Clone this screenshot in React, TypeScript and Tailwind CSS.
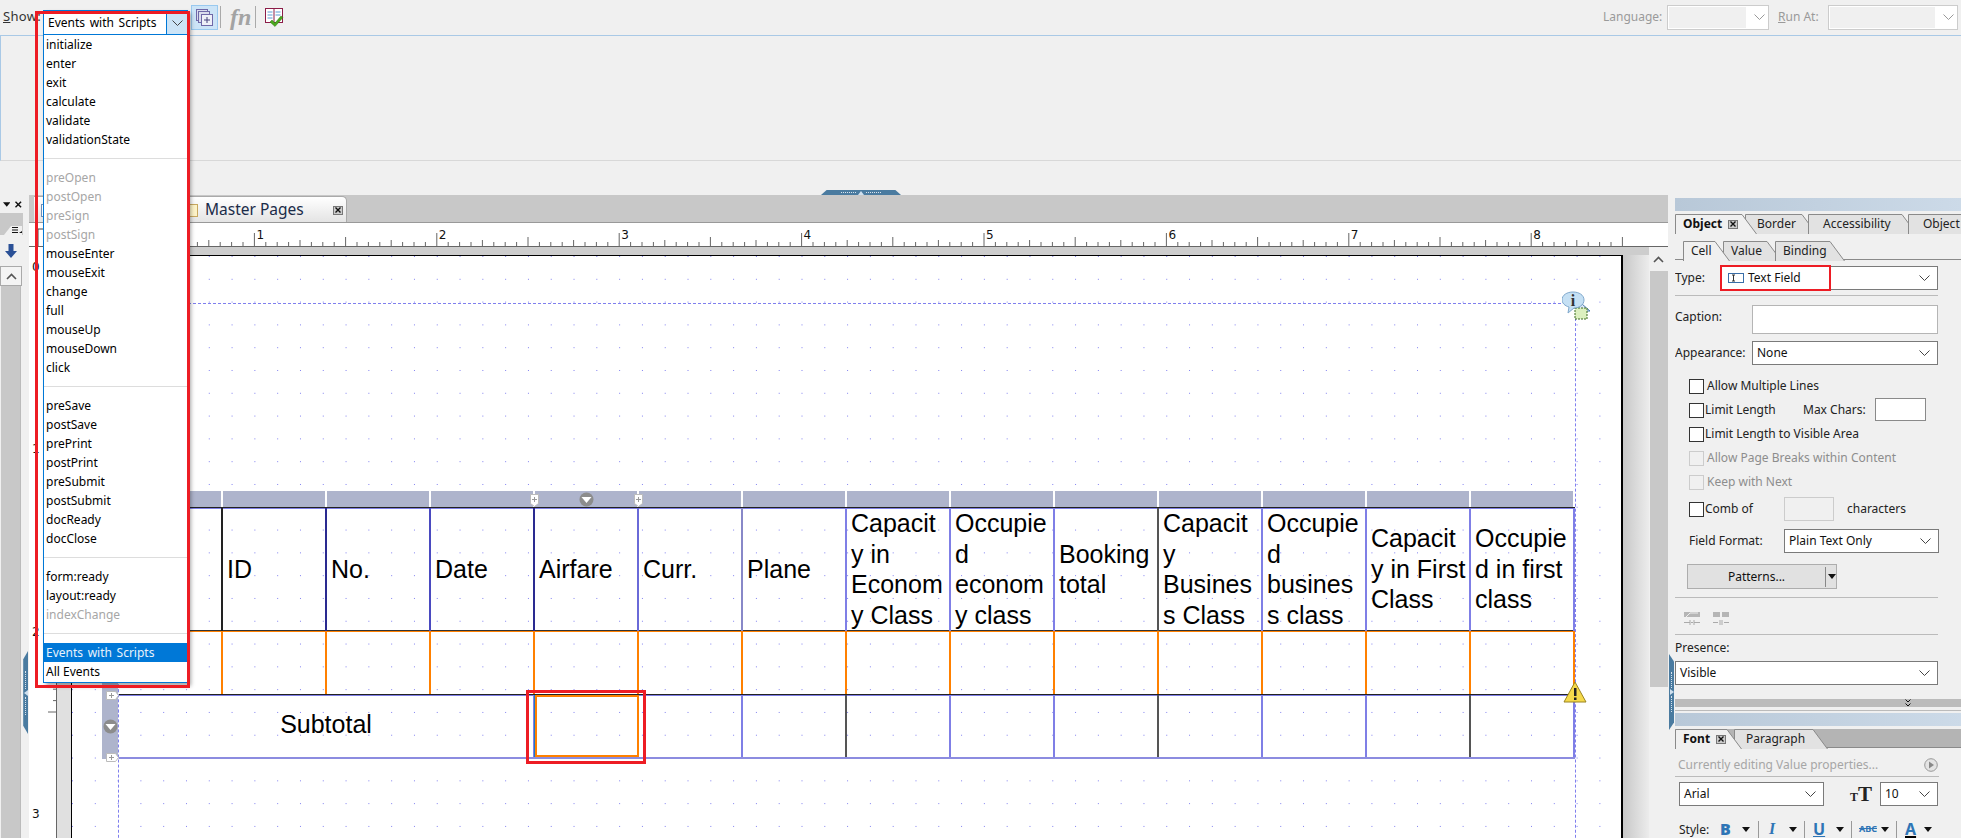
import type { ReactNode } from "react";

const EVENT_GROUPS = [
  [
    ["initialize", 1],
    ["enter", 1],
    ["exit", 1],
    ["calculate", 1],
    ["validate", 1],
    ["validationState", 1],
  ],
  [
    ["preOpen", 0],
    ["postOpen", 0],
    ["preSign", 0],
    ["postSign", 0],
    ["mouseEnter", 1],
    ["mouseExit", 1],
    ["change", 1],
    ["full", 1],
    ["mouseUp", 1],
    ["mouseDown", 1],
    ["click", 1],
  ],
  [
    ["preSave", 1],
    ["postSave", 1],
    ["prePrint", 1],
    ["postPrint", 1],
    ["preSubmit", 1],
    ["postSubmit", 1],
    ["docReady", 1],
    ["docClose", 1],
  ],
  [
    ["form:ready", 1],
    ["layout:ready", 1],
    ["indexChange", 0],
  ],
] as const;

const HEADERS: string[][] = [
  [],
  ["ID"],
  ["No."],
  ["Date"],
  ["Airfare"],
  ["Curr."],
  ["Plane"],
  ["Capacit", "y in", "Econom", "y Class"],
  ["Occupie", "d", "econom", "y class"],
  ["Booking", "total"],
  ["Capacit", "y", "Busines", "s Class"],
  ["Occupie", "d", "busines", "s class"],
  ["Capacit", "y in First", "Class"],
  ["Occupie", "d in first", "class"],
];

const HEADER_LINES = [
  "border-[#222]",
  "border-[#2a2a90]",
  "border-[#4a4ac0]",
  "border-[#2a2a90]",
  "border-[#6a6ad8]",
  "border-[#8888c8]",
  "border-[#7f7fe6]",
  "border-[#7f7fe6]",
  "border-[#7f7fe6]",
  "border-[#555]",
  "border-[#7f7fe6]",
  "border-[#7f7fe6]",
  "border-[#7f7fe6]",
  "border-[#7f7fe6]",
];

const INCH = 182.4;

function Chevron({ color = "#444" }: { color?: string }) {
  return (
    <svg width="11" height="6" viewBox="0 0 11 6" fill="none">
      <path d="M.5.5l5 5 5-5" stroke={color} />
    </svg>
  );
}

function Caret({ color = "#111" }: { color?: string }) {
  return (
    <svg width="8" height="5" viewBox="0 0 8 5">
      <path d="M0 0h8L4 5z" fill={color} />
    </svg>
  );
}

function CloseBox() {
  return (
    <span className="flex h-[9px] w-[10px] items-center justify-center border border-[#777] bg-[#ccc]">
      <svg width="6" height="6" viewBox="0 0 6 6">
        <path d="M.5.5l5 5M5.5.5l-5 5" stroke="#111" strokeWidth="1.4" />
      </svg>
    </span>
  );
}

function HorizontalRuler() {
  const ticks = [];
  for (let i = 0; i <= 136; i++) {
    const x = 43 + (i * INCH) / 16;
    const len = i % 16 === 0 ? 13 : i % 8 === 0 ? 9 : i % 4 === 0 ? 6 : 4;
    ticks.push(<line key={i} x1={x} x2={x} y1={23 - len} y2={23} stroke="#666" />);
  }
  return (
    <svg width="1639" height="23" className="block">
      {ticks}
      <path d="M9 6v17M7 6h14" stroke="#444" fill="none" />
      {[1, 2, 3, 4, 5, 6, 7, 8].map((n) => (
        <text key={n} x={45 + n * INCH} y={16} fontSize="12" fontFamily="DejaVu Sans" fill="#111">
          {n}
        </text>
      ))}
    </svg>
  );
}

function VerticalRuler() {
  const ticks = [];
  for (let i = 0; i <= 40; i++) {
    const y = 9 + (i * INCH) / 16;
    const len = i % 16 === 0 ? 14 : i % 8 === 0 ? 9 : i % 4 === 0 ? 6 : 4;
    ticks.push(<line key={i} x1={28 - len} x2={28} y1={y} y2={y} stroke="#666" />);
  }
  return (
    <svg width="28" height="591" className="block">
      {ticks}
      <line x1="27.5" x2="27.5" y1="0" y2="591" stroke="#666" />
      {[0, 1, 2, 3].map((n) => (
        <text key={n} x={3} y={24 + n * INCH} fontSize="12" fontFamily="DejaVu Sans" fill="#111">
          {n}
        </text>
      ))}
    </svg>
  );
}

function PlusTab({ className }: { className: string }) {
  return (
    <svg width="9" height="13" viewBox="0 0 9 13" className={className}>
      <path d="M.5.5h8v9l-4 3-4-3z" fill="#fff" stroke="#bbb" />
      <path d="M4.5 3v5M2 5.5h5" stroke="#999" />
    </svg>
  );
}

function GrayCircle({ className }: { className: string }) {
  return (
    <svg width="15" height="15" viewBox="0 0 15 15" className={className}>
      <circle cx="7.5" cy="7.5" r="7" fill="#8c8c8c" />
      <path d="M2.5 5h10l-5 6z" fill="#fff" />
    </svg>
  );
}

function Toolbar() {
  return (
    <div className="flex h-[36px] shrink-0 items-center border-b border-[#a9c9e6] pb-[1px] text-[12px] text-[#333]">
      <span className="ml-[3px] w-[188px] text-[13px] tracking-[0.3px]">
        <span className="underline">S</span>how:
      </span>
      <div className="flex h-[25px] w-[27px] items-center justify-center border border-[#99c9ef] bg-[#cce4f7]">
        <svg width="17" height="17" viewBox="0 0 17 17" fill="none" stroke="#6f68a8">
          <rect x=".5" y=".5" width="11" height="11" fill="#d9dcec" />
          <rect x="2.5" y="2.5" width="11" height="11" fill="#d9dcec" />
          <rect x="5.5" y="5.5" width="11" height="11" fill="#eef0f8" />
          <path d="M11 8v6M8 11h6" stroke="#45407c" />
        </svg>
      </div>
      <span className="ml-[2px] h-[22px] w-px bg-[#aaa]" />
      <span className="ml-[9px] w-[25px] font-['Liberation_Serif',serif] text-[24px] leading-none font-bold text-[#a3a3a3] italic">
        fn
      </span>
      <span className="h-[22px] w-px bg-[#aaa]" />
      <svg width="19" height="19" viewBox="0 0 19 19" className="ml-[9px]">
        <rect x=".5" y=".5" width="17" height="14" fill="#fff" stroke="#8c1c48" />
        <path d="M9 1v13" stroke="#8c1c48" />
        <path d="M2.5 4h5M2.5 7h5M2.5 10h5M10.5 4h5M10.5 7h5" stroke="#5b9bd5" />
        <path d="M7 12l3 3 6-7 2 1.500-8 9-5-4.500z" fill="#4aa71e" stroke="#2f7a10" strokeWidth=".5" />
      </svg>
      <span className="ml-[1319px] w-[64px] text-[#9a9a9a]">Language:</span>
      <div className="flex h-[25px] w-[102px] items-center border border-[#ccc] bg-white p-[1px]">
        <span className="h-full w-[77px] bg-[#f0f0f0]" />
        <span className="ml-[8px]">
          <Chevron color="#999" />
        </span>
      </div>
      <span className="ml-[9px] w-[50px] text-[#9a9a9a]">
        <span className="underline">R</span>un At:
      </span>
      <div className="flex h-[25px] w-[130px] items-center border border-[#ccc] bg-white p-[1px]">
        <span className="h-full w-[105px] bg-[#f0f0f0]" />
        <span className="ml-[8px]">
          <Chevron color="#999" />
        </span>
      </div>
    </div>
  );
}

function LeftRail() {
  return (
    <div className="flex w-[29px] shrink-0 flex-col border-r border-[#f0f0f0]">
      <div className="flex h-[18px] w-[22px] items-center gap-[5px] pl-[3px]">
        <Caret />
        <svg width="7" height="7" viewBox="0 0 7 7">
          <path d="M.5.5l6 6M6.5.5l-6 6" stroke="#111" strokeWidth="1.6" />
        </svg>
      </div>
      <div className="flex h-[22px] w-[23px] items-end justify-end bg-[#c8c8c8] pr-[1px]">
        <svg width="18" height="9" viewBox="0 0 18 9">
          <path d="M0 9l7-9h11v9z" fill="#f0f0f0" />
          <path d="M8 1.500h6M8 4h6M8 6.500h6" stroke="#111" />
          <path d="M15 7l3-2v2z" fill="#111" />
        </svg>
      </div>
      <div className="flex h-[31px] w-[22px] items-center justify-center">
        <svg width="12" height="14" viewBox="0 0 12 14">
          <path d="M3.500 0h5v7H12l-6 7-6-7h3.500z" fill="#2a5096" />
        </svg>
      </div>
      <div className="flex h-[20px] w-[22px] items-center justify-center border border-[#aaa] bg-[#f4f4f4]">
        <svg width="11" height="7" viewBox="0 0 11 7" fill="none">
          <path d="M1 6l4.500-4.500L10 6" stroke="#555" strokeWidth="1.600" />
        </svg>
      </div>
      <div className="flex flex-1">
        <div className="ml-[1px] w-[20px] bg-[#c8c8c8]" />
        <div className="w-px bg-[#bbb]" />
        <div className="mt-[365px] ml-[2px] flex h-[83px] w-[5px] flex-col items-center justify-center gap-[1px] bg-[#4a7ba0] [clip-path:polygon(100%_0,100%_100%,0_90%,0_10%)]">
          <span className="h-[18px] border-l border-dotted border-[#d8e4ee]" />
          <svg width="4" height="6" viewBox="0 0 4 6">
            <path d="M4 0v6L0 3z" fill="#cfe0ef" />
          </svg>
          <span className="h-[18px] border-l border-dotted border-[#d8e4ee]" />
        </div>
      </div>
    </div>
  );
}

function HeaderCell({ lines, line }: { lines: string[]; line: string }) {
  return (
    <div className={`flex items-center border-r-2 pb-[3px] pl-[4px] text-[25px] leading-[30.5px] text-black ${line}`}>
      <div>
        {lines.map((text) => (
          <div key={text} className="whitespace-nowrap">
            {text}
          </div>
        ))}
      </div>
    </div>
  );
}

function FormTable() {
  return (
    <div className="relative mt-[187px] font-['Liberation_Sans',Arial,sans-serif]">
      <div className="grid h-[16px] grid-cols-14">
        {HEADERS.map((_, i) => (
          <div key={i} className="border-r-2 border-white bg-[#aeb4cc]" />
        ))}
      </div>
      <PlusTab className="absolute top-[3px] left-[411px]" />
      <PlusTab className="absolute top-[3px] left-[515px]" />
      <GrayCircle className="absolute top-[1px] left-[460px]" />

      <div className="grid h-[123px] grid-cols-14 border-t border-[#222] shadow-[inset_0_1px_0_#7f7fe6]">
        {HEADERS.map((lines, i) => (
          <HeaderCell key={i} lines={lines} line={HEADER_LINES[i]} />
        ))}
      </div>

      <div className="grid h-[64px] grid-cols-14 border-t border-[#333] shadow-[inset_0_1px_0_#ff8000]">
        {HEADERS.map((_, i) => (
          <div key={i} className="border-r-2 border-[#ff8000]" />
        ))}
      </div>

      <div className="grid h-[65px] grid-cols-14 border-t border-b-2 border-t-[#222] border-b-[#8c8ce0] shadow-[inset_0_1px_0_#7f7fe6]">
        <div className="col-span-4 flex items-center justify-center border-r-2 border-[#7f7fe6] pb-[2px] text-[25px] text-black">
          Subtotal
        </div>
        <div className="relative border-2 border-[#ff8000] shadow-[-1px_0_0_#1f78c8]">
          <div className="absolute -top-[7px] -left-[11px] h-[74px] w-[120px] border-[3px] border-[#ed1c24]" />
        </div>
        {HEADERS.slice(5).map((_, i) => (
          <div key={i} className={`border-r-2 ${i % 3 === 1 ? "border-[#555]" : "border-[#7f7fe6]"}`} />
        ))}
      </div>

      <div className="absolute top-[140px] -left-[17px] h-[128px] w-[16px] bg-[#aeb4cc]">
        <PlusTab className="absolute top-[58px] left-[6px] -rotate-90" />
        <GrayCircle className="absolute top-[88px] left-[1px]" />
        <PlusTab className="absolute top-[120px] left-[6px] -rotate-90" />
      </div>

      <svg width="24" height="22" viewBox="0 0 24 22" className="absolute top-[190px] -right-[12px]">
        <path d="M12 1l11 20H1z" fill="#f5d94a" stroke="#9a8420" />
        <rect x="11" y="7" width="2.500" height="8" fill="#222" />
        <rect x="11" y="16.500" width="2.500" height="2.500" fill="#222" />
      </svg>
    </div>
  );
}

function DesignPage() {
  return (
    <div className="h-full w-[1552px] border-t border-r-2 border-l border-black bg-white bg-[radial-gradient(circle_at_0.5px_0.5px,#8080f0_0.55px,transparent_0.65px)] bg-[size:22.8px_22.8px] pt-[47px] pl-[46px]">
      <div className="relative h-[600px] w-[1458px] border-t border-r border-l border-dashed border-[#7f7fee]">
        <svg width="28" height="29" viewBox="0 0 28 29" className="absolute -top-[13px] -right-[15px]">
          <path d="M14 18l6-5 8 7H16z" fill="#dbe6f4" stroke="#4a7bb0" />
          <rect x="13" y="17" width="12" height="11" fill="#dcf0c0" stroke="#3a6a20" strokeDasharray="2 1" />
          <path d="M11 1c6 0 11 3 11 8s-5 8-10 8l-6 5 1-6C3 15 0 12 0 9c0-5 5-8 11-8z" fill="#c5e0f4" stroke="#7fa8cc" />
          <text x="11" y="15" textAnchor="middle" fontSize="16" fontWeight="700" fontFamily="Liberation Serif" fill="#333">
            i
          </text>
        </svg>
        <FormTable />
      </div>
    </div>
  );
}

function CenterPane() {
  return (
    <div className="flex w-[1639px] shrink-0 flex-col">
      <div className="flex h-[28px] shrink-0 items-end border-b border-[#999] bg-[#c8c8c8] pl-[5px]">
        <div className="flex h-[26px] w-[313px] items-center rounded-tr-[5px] border-t border-r border-[#aaa] bg-gradient-to-b from-white to-[#e4e4e4] pt-[1px] text-[15.5px] text-[#1a2b48]">
          <span className="ml-[7px] h-[13px] w-[11px] border border-[#6f8fb8] bg-white" />
          <span className="ml-[136px] h-[13px] w-[10px] border border-[#c8a860] bg-[#fdf3c8]" />
          <span className="ml-[7px] w-[128px]">Master Pages</span>
          <CloseBox />
        </div>
      </div>
      <div className="h-[24px] shrink-0 border-b border-[#666] bg-white">
        <HorizontalRuler />
      </div>
      <div className="flex min-h-0 flex-1">
        <div className="w-[28px] shrink-0 bg-white">
          <VerticalRuler />
        </div>
        <div className="flex w-[1592px] shrink-0 flex-col">
          <div className="h-[8px] shrink-0 bg-[#cdcdcd]" />
          <div className="flex min-h-0 flex-1">
            <div className="w-[14px] shrink-0 bg-[#e0e0e0]" />
            <DesignPage />
            <div className="w-[26px] shrink-0 bg-gradient-to-r from-[#c8c8c8] to-[#ececec]" />
          </div>
        </div>
        <div className="flex w-[19px] shrink-0 flex-col bg-[#f0f0f0]">
          <div className="flex h-[24px] items-center justify-center">
            <svg width="11" height="7" viewBox="0 0 11 7" fill="none">
              <path d="M1 6l4.500-4.500L10 6" stroke="#555" strokeWidth="1.600" />
            </svg>
          </div>
          <div className="ml-[1px] h-[416px] bg-[#c8c8c8]" />
        </div>
      </div>
    </div>
  );
}

function PanelTab({
  label,
  width,
  pad,
  active,
  close,
  viewClass,
}: {
  label: string;
  width: number;
  pad: string;
  active?: boolean;
  close?: boolean;
  viewClass: string;
}) {
  return (
    <div className={`relative h-[19px] shrink-0 ${viewClass}`}>
      <svg width={width} height="20" className="absolute top-0 left-0">
        <path
          d={`M.5 20V.5H${width - 15}L${width - 0.5} 20`}
          fill={active ? "#f0f0f0" : "#e2e2e2"}
          stroke="#8a8a8a"
        />
      </svg>
      <div className={`relative flex h-full items-center gap-[6px] pt-[1px] ${pad} ${active && close ? "font-bold text-[#111]" : "text-[#222]"}`}>
        {label}
        {close && <CloseBox />}
      </div>
    </div>
  );
}

function PanelSelect({ value, className, icon }: { value: string; className: string; icon?: ReactNode }) {
  return (
    <div className={`flex h-[24px] items-center justify-between border border-[#7a7a7a] bg-white pr-[7px] pl-[4px] ${className}`}>
      <span className="flex items-center gap-[3px] text-[#111]">
        {icon}
        {value}
      </span>
      <Chevron />
    </div>
  );
}

function CheckRow({ label, disabled, className = "", tight }: { label: string; disabled?: boolean; className?: string; tight?: boolean }) {
  return (
    <div className={`ml-[14px] flex h-[16px] shrink-0 items-center ${className}`}>
      <span className={`size-[15px] shrink-0 border ${disabled ? "border-[#ccc]" : "border-[#333] bg-white"}`} />
      <span className={`whitespace-nowrap ${tight ? "ml-px" : "ml-[3px]"} ${disabled ? "text-[#8d8d8d]" : "text-[#222]"}`}>{label}</span>
    </div>
  );
}

function HeaderBand({ className }: { className: string }) {
  return <div className={`h-[13px] shrink-0 bg-gradient-to-r from-[#b8c8d8] to-[#ccdae8] ${className}`} />;
}

function PropertiesPanel() {
  return (
    <div className="flex w-[286px] shrink-0 flex-col overflow-hidden text-[12px] text-[#222]">
      <HeaderBand className="mt-[3px]" />
      <div className="mt-[3px] flex shrink-0">
        <PanelTab label="Object" width={82} pad="pl-[8px]" active close viewClass="z-10 w-[82px]" />
        <PanelTab label="Border" width={72} pad="pl-[12px]" viewClass="-ml-[12px] w-[72px]" />
        <PanelTab label="Accessibility" width={109} pad="pl-[15px]" viewClass="-ml-[9px] w-[109px]" />
        <PanelTab label="Object" width={70} pad="pl-[15px]" viewClass="-ml-[9px] w-[70px]" />
      </div>
      <div className="mt-[8px] flex h-[19px] shrink-0 border-b border-[#8a8a8a] pl-[8px]">
        <PanelTab label="Cell" width={47} pad="pl-[8px]" active viewClass="z-10 w-[47px]" />
        <PanelTab label="Value" width={59} pad="pl-[8px]" viewClass="-ml-[7px] w-[59px]" />
        <PanelTab label="Binding" width={70} pad="pl-[8px]" viewClass="-ml-[7px] w-[70px]" />
      </div>

      <div className="mt-[6px] flex h-[24px] shrink-0 items-center">
        <span className="w-[45px]">Type:</span>
        <div className="relative">
          <PanelSelect
            value="Text Field"
            className="w-[218px] pl-[7px]"
            icon={
              <svg width="16" height="10" viewBox="0 0 16 10" className="mr-[1px]">
                <rect x=".5" y=".5" width="15" height="9" fill="#fff" stroke="#3a6ea8" />
                <path d="M4 2h3M4 8h3M5.500 2v6" stroke="#333" />
              </svg>
            }
          />
          <div className="absolute -top-px left-0 h-[26px] w-[111px] border-2 border-[#ed1c24]" />
        </div>
      </div>
      <div className="mt-[5px] h-px w-[263px] shrink-0 bg-[#bbb]" />

      <div className="mt-[9px] flex h-[29px] shrink-0 items-center">
        <span className="w-[77px] pb-[6px]">Caption:</span>
        <div className="h-full w-[186px] border border-[#b5b5b5] bg-white" />
      </div>
      <div className="mt-[7px] flex h-[24px] shrink-0 items-center">
        <span className="w-[77px]">Appearance:</span>
        <PanelSelect value="None" className="w-[186px]" />
      </div>

      <CheckRow label="Allow Multiple Lines" className="mt-[13px]" />
      <div className="relative mt-[8px] flex h-[16px] shrink-0 items-center">
        <CheckRow label="Limit Length" tight />
        <span className="absolute left-[128px]">Max Chars:</span>
        <div className="absolute top-[-4px] left-[200px] h-[23px] w-[51px] border border-[#8a8a8a] bg-white" />
      </div>
      <CheckRow label="Limit Length to Visible Area" className="mt-[8px]" tight />
      <CheckRow label="Allow Page Breaks within Content" className="mt-[8px]" disabled />
      <CheckRow label="Keep with Next" className="mt-[8px]" disabled />
      <div className="mt-[11px] flex h-[16px] shrink-0 items-center">
        <CheckRow label="Comb of" tight className="w-[95px]" />
        <div className="h-[24px] w-[50px] border border-[#ccc]" />
        <span className="ml-[13px]">characters</span>
      </div>

      <div className="mt-[12px] flex h-[24px] shrink-0 items-center">
        <span className="ml-[14px] w-[95px]">Field Format:</span>
        <PanelSelect value="Plain Text Only" className="w-[155px]" />
      </div>
      <div className="mt-[11px] ml-[12px] flex h-[25px] w-[150px] shrink-0 items-center border border-[#adadad] bg-[#e1e1e1]">
        <span className="w-[137px] text-center text-[#111]">Patterns...</span>
        <span className="h-[20px] w-px bg-[#888]" />
        <span className="ml-[2px]">
          <Caret />
        </span>
      </div>
      <div className="mt-[8px] h-px w-[263px] shrink-0 bg-[#bbb]" />
      <div className="mt-[14px] ml-[9px] flex h-[14px] shrink-0 gap-[13px]">
        <svg width="16" height="14" viewBox="0 0 16 14">
          <path d="M0 0h16v5H0z" fill="#b5b5b5" />
          <path d="M2 5l4-4h8" fill="none" stroke="#eee" />
          <path d="M0 10.500h6M10 10.500h6M6 8v5M10 8v5M7 10.500h2" stroke="#aaa" />
        </svg>
        <svg width="16" height="14" viewBox="0 0 16 14">
          <path d="M0 0h7v5H0zM9 0h7v5H9z" fill="#b5b5b5" />
          <path d="M0 10.500h5M11 10.500h5M7 8v5M9 8v5" stroke="#aaa" />
        </svg>
      </div>
      <div className="mt-[8px] h-px w-[263px] shrink-0 bg-[#bbb]" />
      <div className="mt-[6px] h-[14px] shrink-0 leading-[14px]">Presence:</div>
      <PanelSelect value="Visible" className="mt-[6px] w-[263px] shrink-0" />

      <div className="mt-[14px] flex h-[8px] shrink-0 items-center bg-[#bbb] pl-[230px]">
        <svg width="6" height="8" viewBox="0 0 6 8" fill="none" stroke="#111">
          <path d="M.5.500L3 3 5.500.500M.5 4.500L3 7l2.500-2.500" />
        </svg>
      </div>
      <div className="mt-[3px] h-px shrink-0 bg-[#bbb]" />
      <HeaderBand className="mt-[2px]" />
      <div className="mt-[3px] flex h-[19px] shrink-0 border-b border-[#8a8a8a] bg-[#b4b4b4]">
        <PanelTab label="Font" width={67} pad="pl-[8px]" active close viewClass="z-10 w-[67px]" />
        <PanelTab label="Paragraph" width={94} pad="pl-[12px]" viewClass="-ml-[8px] w-[94px]" />
      </div>
      <div className="mt-[8px] flex h-[17px] shrink-0 items-center justify-between pr-[23px] pl-[3px] text-[#a6a6a6]">
        <span>Currently editing Value properties...</span>
        <svg width="14" height="14" viewBox="0 0 14 14">
          <circle cx="7" cy="7" r="6.300" fill="#e4e4e4" stroke="#999" />
          <path d="M5 3.500l5 3.500-5 3.500z" fill="#888" />
        </svg>
      </div>
      <div className="mt-[3px] h-px w-[264px] shrink-0 bg-[#bbb]" />
      <div className="mt-[5px] flex h-[24px] shrink-0 items-center">
        <PanelSelect value="Arial" className="ml-[4px] w-[145px]" />
        <span className="ml-[26px] w-[30px] font-['Liberation_Serif',serif] text-[21px] leading-none font-bold text-[#222]">
          <span className="text-[12px]">T</span>T
        </span>
        <PanelSelect value="10" className="w-[58px]" />
      </div>
      <div className="mt-[14px] flex h-[18px] shrink-0 items-center pl-[4px]">
        <span className="w-[41px] pt-[1px] leading-[15px]">Style:</span>
        <span className="w-[22px] text-[16px] leading-[16px] font-black text-[#2e75b6]">B</span>
        <Caret />
        <span className="mx-[8px] h-[17px] w-px bg-[#999]" />
        <span className="w-[22px] pl-[2px] font-['Liberation_Serif',serif] text-[16px] leading-[16px] font-bold text-[#2e75b6] italic">I</span>
        <Caret />
        <span className="mx-[7px] h-[17px] w-px bg-[#999]" />
        <span className="w-[24px] pl-[1px] text-[16px] leading-[16px] font-bold text-[#2e75b6] underline">U</span>
        <Caret />
        <span className="mx-[7px] h-[17px] w-px bg-[#999]" />
        <span className="w-[22px] text-[9px] leading-[16px] font-bold text-[#2e75b6] line-through">ABC</span>
        <Caret />
        <span className="mx-[7px] h-[17px] w-px bg-[#999]" />
        <span className="w-[20px] pl-[1px] text-[16px] leading-[16px] font-bold text-[#2e75b6] underline decoration-black decoration-2">A</span>
        <Caret />
      </div>
    </div>
  );
}

function EventsDropdown() {
  return (
    <div className="absolute top-[10px] left-[43px] w-[145px] text-[12px] shadow-[3px_3px_4px_rgba(0,0,0,0.35)]">
      <div className="flex h-[25px] items-stretch border border-[#0078d7] bg-white">
        <span className="flex-1 self-center pl-[4px] text-black [word-spacing:1.5px]">Events with Scripts</span>
        <span className="flex w-[21px] items-center justify-center border-l border-[#0078d7] bg-[#cce4f7]">
          <Chevron />
        </span>
      </div>
      <div className="border-x border-b border-[#0078d7] bg-white">
        {EVENT_GROUPS.map((group, g) => (
          <div key={g}>
            {group.map(([name, on]) => (
              <div key={name} className={`h-[19px] pl-[2px] leading-[19px] ${on ? "text-black" : "text-[#a6a6a6]"}`}>
                {name}
              </div>
            ))}
            <div className="flex h-[19px] items-center">
              <div className="h-px w-full bg-[#ddd]" />
            </div>
          </div>
        ))}
        <div className="h-[19px] bg-[#0078d7] pl-[2px] leading-[19px] text-[#e8f2fb] [word-spacing:1.5px]">Events with Scripts</div>
        <div className="h-[20px] pl-[2px] leading-[19px] text-black">All Events</div>
      </div>
    </div>
  );
}

export default function App() {
  return (
    <div className="relative flex h-[838px] w-[1961px] flex-col overflow-hidden bg-[#f0f0f0] font-['Noto_Sans',sans-serif]">
      <Toolbar />
      <div className="h-[125px] shrink-0 border-b border-l border-b-[#d8d8d8] border-l-[#a9c9e6]" />
      <div className="flex h-[34px] shrink-0 items-end pl-[821px]">
        <div className="flex h-[5px] w-[80px] items-center justify-center gap-[2px] bg-[#4a7ba0] [clip-path:polygon(7%_0,93%_0,100%_100%,0_100%)]">
          <span className="w-[15px] border-t border-dotted border-[#d8e4ee]" />
          <svg width="6" height="4" viewBox="0 0 6 4">
            <path d="M3 0l3 4H0z" fill="#cfe0ef" />
          </svg>
          <span className="w-[15px] border-t border-dotted border-[#d8e4ee]" />
        </div>
      </div>
      <div className="flex min-h-0 flex-1">
        <LeftRail />
        <CenterPane />
        <div className="flex w-[7px] shrink-0 items-start">
          <div className="mt-[459px] ml-px flex h-[76px] w-[5px] flex-col items-center justify-center gap-[1px] bg-[#4a7ba0] [clip-path:polygon(0_0,100%_10%,100%_90%,0_100%)]">
            <span className="h-[16px] border-l border-dotted border-[#d8e4ee]" />
            <svg width="4" height="6" viewBox="0 0 4 6">
              <path d="M0 0v6l4-3z" fill="#cfe0ef" />
            </svg>
            <span className="h-[16px] border-l border-dotted border-[#d8e4ee]" />
          </div>
        </div>
        <PropertiesPanel />
      </div>
      <EventsDropdown />
      <div className="absolute top-[11px] left-[35px] h-[677px] w-[155px] border-[3px] border-[#ed1c24]" />
    </div>
  );
}
